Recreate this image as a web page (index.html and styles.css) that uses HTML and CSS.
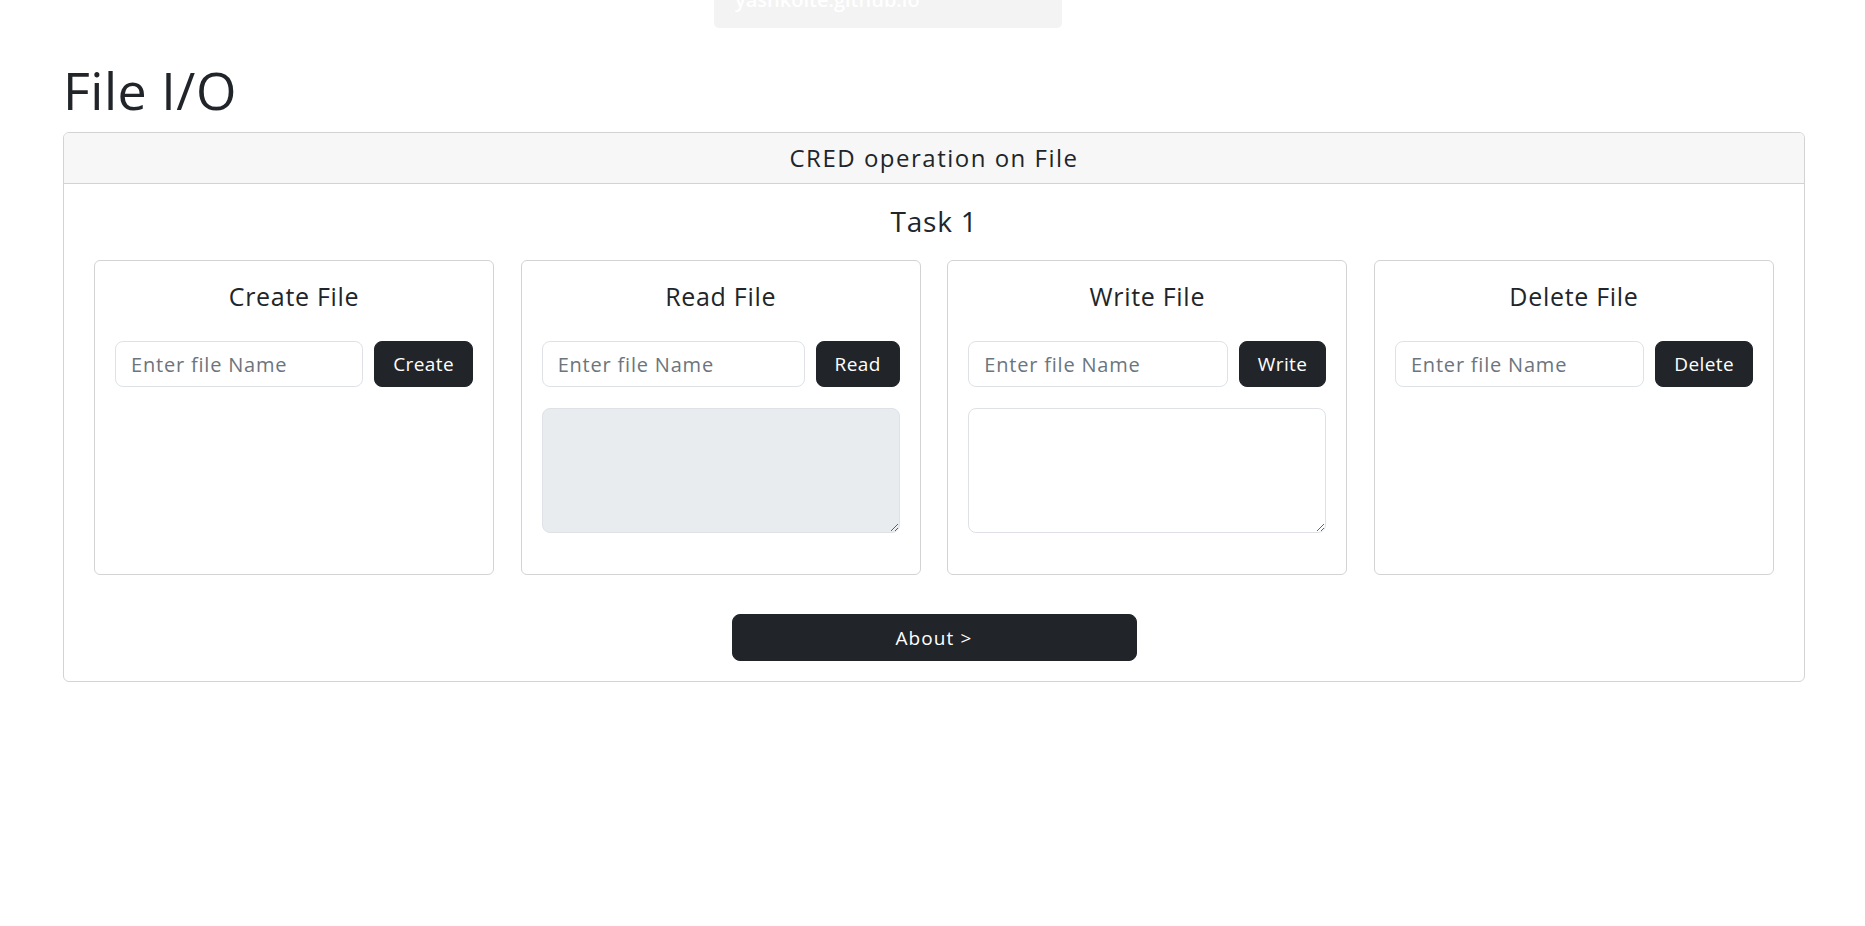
FILE: index.html
```html
<!DOCTYPE html>
<html lang="en">
<head>
<meta charset="utf-8">
<title>File I/O</title>
<link rel="stylesheet" href="styles.css">
</head>
<body>
<div class="toast"><span class="toast-text">yashkolte.github.io</span></div>
<main class="container">
  <h1 class="page-title">File I/O</h1>
  <section class="card">
    <div class="card-header">CRED operation on File</div>
    <div class="card-body">
      <h2 class="task-title">Task 1</h2>
      <div class="ops">
        <div class="op-card">
          <h3 class="op-title">Create File</h3>
          <div class="op-row">
            <input class="field" type="text" size="1" placeholder="Enter file Name">
            <button class="btn">Create</button>
          </div>
        </div>
        <div class="op-card">
          <h3 class="op-title">Read File</h3>
          <div class="op-row">
            <input class="field" type="text" size="1" placeholder="Enter file Name">
            <button class="btn">Read</button>
          </div>
          <textarea class="area area-disabled" disabled></textarea>
        </div>
        <div class="op-card">
          <h3 class="op-title">Write File</h3>
          <div class="op-row">
            <input class="field" type="text" size="1" placeholder="Enter file Name">
            <button class="btn">Write</button>
          </div>
          <textarea class="area"></textarea>
        </div>
        <div class="op-card">
          <h3 class="op-title">Delete File</h3>
          <div class="op-row">
            <input class="field" type="text" size="1" placeholder="Enter file Name">
            <button class="btn">Delete</button>
          </div>
        </div>
      </div>
      <div class="about-wrap">
        <button class="btn btn-about">About &gt;</button>
      </div>
    </div>
  </section>
</main>
</body>
</html>
```

FILE: styles.css
```css
* { box-sizing: border-box; }
html, body { margin: 0; padding: 0; }
body {
  font-family: "Open Sans", "Liberation Sans", sans-serif;
  color: #212529;
  background: #fff;
  position: relative;
  min-height: 926px;
}
.toast {
  position: absolute;
  left: 714px;
  top: -32px;
  width: 348px;
  height: 60px;
  background: #f3f3f3;
  border-radius: 5px;
  padding: 0 0 0 21px;
}
.toast-text {
  display: block;
  color: #fff;
  font-size: 20px;
  font-weight: 600;
  line-height: 1;
  margin-top: 22px;
}
.container {
  width: 1742px;
  margin-left: 63px;
  padding-top: 58px;
}
.page-title {
  margin: 0 0 11px 0;
  font-size: 52px;
  font-weight: 400;
  line-height: 63px;
  letter-spacing: 0.5px;
}
.card {
  border: 1px solid #d3d3d3;
  border-radius: 6px;
  overflow: hidden;
}
.card-header {
  background: #f7f7f7;
  border-bottom: 1px solid #d3d3d3;
  height: 51px;
  text-align: center;
  font-size: 24px;
  line-height: 36px;
  padding-top: 7px;
  letter-spacing: 1.5px;
}
.card-body {
  padding: 20px 30px 20px 30px;
}
.task-title {
  margin: 0 0 22px 0;
  text-align: center;
  font-size: 28px;
  font-weight: 400;
  line-height: 34px;
  letter-spacing: 0.8px;
}
.ops {
  display: grid;
  grid-template-columns: repeat(4, minmax(0, 1fr));
  column-gap: 26.6px;
}
.op-card {
  border: 1px solid #d3d3d3;
  border-radius: 6px;
  padding: 20px 20px 41px 20px;
  min-height: 315px;
}
.op-title {
  margin: 0 0 29px 0;
  text-align: center;
  font-size: 25px;
  font-weight: 400;
  line-height: 31px;
  letter-spacing: 0.7px;
}
.op-row {
  display: flex;
  gap: 11px;
  align-items: stretch;
}
.field {
  flex: 1 1 auto;
  width: 0;
  min-width: 0;
  height: 46px;
  border: 1px solid #dee2e6;
  border-radius: 8px;
  padding: 0 15px;
  font-family: inherit;
  font-size: 20px;
  letter-spacing: 0.8px;
  color: #212529;
  background: #fff;
}
.field::placeholder { color: #6c757d; }
.btn {
  flex: 0 0 auto;
  height: 46px;
  border: 1px solid #212529;
  background: #212529;
  color: #fff;
  border-radius: 8px;
  padding: 0 18px;
  font-family: inherit;
  font-size: 19px;
  letter-spacing: 0.4px;
}
.area {
  display: block;
  width: 100%;
  height: 125px;
  margin-top: 21px;
  border: 1px solid #dee2e6;
  border-radius: 8px;
  background: #fff;
  resize: vertical;
  font-family: inherit;
}
.area-disabled { background: #e9ecef; }
.about-wrap {
  display: flex;
  justify-content: center;
  margin-top: 39px;
}
.btn-about {
  width: 405px;
  height: 47px;
  font-size: 19px;
  letter-spacing: 1.1px;
}
```
